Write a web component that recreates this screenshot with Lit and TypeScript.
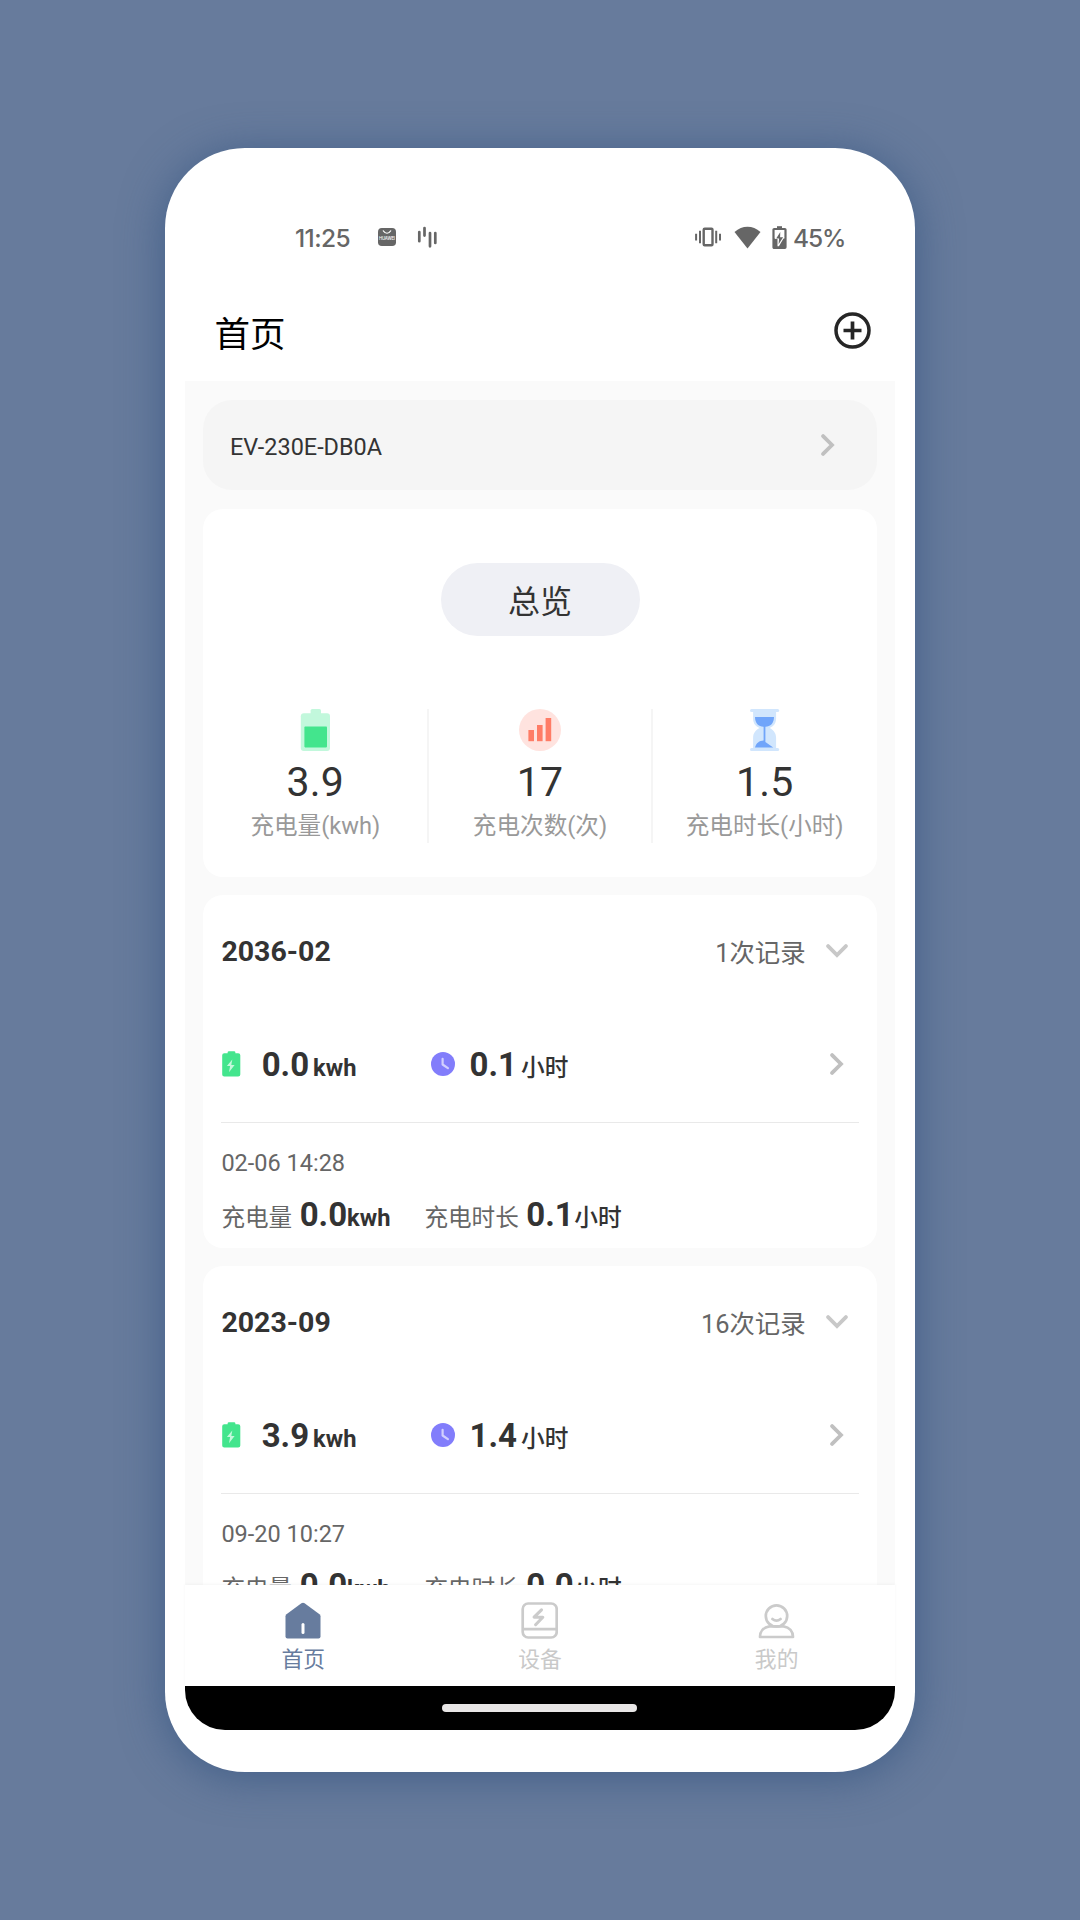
import { LitElement, html, css, svg } from "lit";
import { customElement, property } from "lit/decorators.js";

interface Session {
  time: string;
  energy: string;
  hours: string;
}

interface MonthRecord {
  month: string;
  count: number;
  energy: string;
  hours: string;
  sessions: Session[];
}

const MONTHS: MonthRecord[] = [
  {
    month: "2036-02",
    count: 1,
    energy: "0.0",
    hours: "0.1",
    sessions: [{ time: "02-06 14:28", energy: "0.0", hours: "0.1" }],
  },
  {
    month: "2023-09",
    count: 16,
    energy: "3.9",
    hours: "1.4",
    sessions: [{ time: "09-20 10:27", energy: "0.0", hours: "0.0" }],
  },
];

const batteryLevel = svg`
  <svg width="30" height="42" viewBox="0 0 30 42">
    <rect x="10.600" y="0" width="10.4" height="8" rx="1.6" fill="#c2f8dc"/>
    <rect x="0.8" y="4.2" width="29.2" height="37.8" rx="3" fill="#c2f8dc"/>
    <rect x="4.400" y="17.6" width="22.600" height="20.8" rx="0.8" fill="#43e58d"/>
  </svg>`;

const barChart = svg`
  <svg width="42" height="42" viewBox="0 0 42 42">
    <circle cx="21" cy="21" r="21" fill="#ffe3df"/>
    <rect x="9.4" y="21" width="5.6" height="11.2" fill="#ff7c66"/>
    <rect x="18" y="16" width="5.6" height="16.2" fill="#ff7c66"/>
    <rect x="26.6" y="9" width="5.6" height="23.2" fill="#ff7c66"/>
  </svg>`;

const hourglass = svg`
  <svg width="30" height="42" viewBox="0 0 30 42">
    <g fill="#d1e6fd">
      <rect x="0" y="0" width="29.2" height="3" rx="1.5"/>
      <rect x="0" y="39" width="29.2" height="3" rx="1.5"/>
      <path d="M3.100 2h23v7.5c0 5-2.500 7.500-6.500 9.500 4 2 6.500 5 6.500 10v10.500h-23V29c0-5 2.500-8 6.500-10-4-2-6.500-4.500-6.500-9.500z"/>
    </g>
    <path d="M5 8h19c0 6-3.500 9.800-8.600 9.800V33l7.800 5.500H5c1.200-4.500 4.300-6.800 8.600-7V17.800C8.500 17.800 5 14 5 8z" fill="#70a5fa"/>
  </svg>`;

const chargeBadge = svg`
  <svg width="19" height="26" viewBox="0 0 19 26">
    <path d="M5.600 1.600Q5.600 0.200 7 0.200h5Q13.400 0.200 13.400 1.600V2.200h2.800q2.100 0 2.100 2.100v19.200q0 2.100-2.100 2.100H2.300q-2.100 0-2.100-2.100V4.300q0-2.100 2.100-2.100h3.300z" fill="#43e58d"/>
    <path d="M10.300 8.400L4.900 15h3.200L7 21.300l5.600-7.300H9.300z" fill="#c4f8dc"/>
  </svg>`;

const clockBadge = svg`
  <svg width="24" height="24" viewBox="0 0 24 24">
    <circle cx="12" cy="12" r="12" fill="#827dfb"/>
    <path d="M11.600 6.800v5.700l5.300 3.700" fill="none" stroke="#d2d0fe" stroke-width="2.200" stroke-linecap="round" stroke-linejoin="round"/>
  </svg>`;

const chevronRight = svg`
  <svg width="14" height="22" viewBox="0 0 14 22">
    <path d="M2.100 2.100L11 11l-8.900 8.900" fill="none" stroke="#c0c0c0" stroke-width="3.800" stroke-linecap="round"/>
  </svg>`;

const chevronDown = svg`
  <svg width="22" height="14" viewBox="0 0 22 14">
    <path d="M2.100 2.100L11 11l8.900-8.900" fill="none" stroke="#c8c8c8" stroke-width="3.800" stroke-linecap="round"/>
  </svg>`;

const homeIcon = svg`
  <svg width="36" height="37" viewBox="0 0 36 37">
    <path d="M16.400 1.200q1.600-1.100 3.200 0l14.900 11q1 0.800 1 2V34.500q0 2-2 2h-31q-2 0-2-2V14.200q0-1.200 1-2z" fill="#677c9e"/>
    <path d="M18 22.500v8" stroke="#fff" stroke-width="3" stroke-linecap="round"/>
  </svg>`;

const deviceIcon = svg`
  <svg width="37" height="37" viewBox="0 0 37 37" fill="none" stroke="#cbcbcb" stroke-width="2.700">
    <rect x="1.700" y="1.500" width="34" height="34" rx="5.500"/>
    <path d="M1.700 27.200h34"/>
    <path d="M20.500 7.800l-7.400 7.400h8.700l-7.200 7.500" stroke-width="3.100" stroke-linecap="round" stroke-linejoin="round"/>
  </svg>`;

const userIcon = svg`
  <svg width="37" height="37" viewBox="0 0 37 37" fill="none" stroke="#cbcbcb" stroke-width="2.700" stroke-linecap="round" stroke-linejoin="round">
    <circle cx="18.500" cy="14" r="10.700"/>
    <path d="M14.400 17q4.100 3.400 8.200 0"/>
    <path d="M11.500 24.300C5.500 25.200 2 29.500 2 35h33c0-5.500-3.500-9.800-9.500-10.700z"/>
  </svg>`;

@customElement("status-bar")
export class StatusBar extends LitElement {
  static styles = css`
    :host {
      display: flex;
      align-items: center;
      justify-content: space-between;
      height: 48px;
      padding: 0 50px 0 110px;
      color: #666;
      font-family: Inter, Roboto, sans-serif;
      font-size: 24.5px;
      font-weight: 500;
    }
    .side {
      display: flex;
      align-items: center;
    }
    .time {
      width: 56px;
      padding-top: 1px;
      white-space: nowrap;
      letter-spacing: -0.6px;
    }
    .bag {
      margin-left: 27px;
    }
    .voice {
      margin-left: 21px;
    }
    .wifi {
      margin-left: 13px;
    }
    .battery {
      margin: 0 6.500px 0 10.500px;
    }
    .percent {
      width: 52px;
      padding-top: 1px;
      letter-spacing: -1.1px;
      white-space: nowrap;
    }
    svg {
      display: block;
    }
  `;

  render() {
    return html`
      <div class="side">
        <span class="time">11:25</span>
        <svg class="bag" width="18" height="18" viewBox="0 0 18 18">
          <rect width="18" height="18" rx="3.800" fill="#666" />
          <path d="M5.300 2.800q3.700 5 7.400 0" fill="none" stroke="#fff" stroke-width="1.100" stroke-linecap="round" />
          <text x="9" y="11.800" font-size="4.200" font-weight="500" fill="#fff" text-anchor="middle" textLength="16">HUAWEI</text>
        </svg>
        <svg class="voice" width="20" height="22" viewBox="0 0 20 22">
          <path d="M2.300 6v9.200M7.500 2.100v7.500M13 7v13.300M18.300 7v10" stroke="#666" stroke-width="2.700" stroke-linecap="round" />
        </svg>
      </div>
      <div class="side">
        <svg width="26" height="20" viewBox="0 0 26 20">
          <rect x="8.700" y="1.800" width="8.800" height="16.400" rx="1" fill="none" stroke="#666" stroke-width="2.400" />
          <path d="M1.100 6.800v6.800M5 3.800v12.400M21.200 3.800v12.400M25 6.800v6.800" stroke="#666" stroke-width="2" />
        </svg>
        <svg class="wifi" width="27" height="23" viewBox="0 0 27 23">
          <path d="M0.500 6Q6.500 0.700 13.500 0.700T26.500 6L13.500 22.600z" fill="#666" />
        </svg>
        <svg class="battery" width="15" height="23" viewBox="0 0 15 23">
          <rect x="5" y="0.200" width="5" height="3" fill="#666" />
          <rect x="1.500" y="3" width="12" height="18.800" rx="0.600" fill="none" stroke="#666" stroke-width="2.200" />
          <path d="M1.500 12.500h12v9.300h-12z" fill="#666" />
          <path d="M8.500 4.500L2.900 13h2.600v7.200h1.400L12.400 11H10V4.500z" fill="#fff" />
          <path d="M8.300 6L4.200 12.600h2.900l-0.500 5.600 4.500-6.900H8.100z" fill="#666" />
        </svg>
        <span class="percent">45%</span>
      </div>
    `;
  }
}

@customElement("overview-card")
export class OverviewCard extends LitElement {
  static styles = css`
    :host {
      display: flex;
      flex-direction: column;
      align-items: center;
      flex: none;
      height: 368.4px;
      box-sizing: border-box;
      padding-top: 54.4px;
      border-radius: 20px;
      background: #fff;
    }
    .pill {
      width: 199px;
      height: 73px;
      border-radius: 37px;
      background: #eff0f5;
      color: #333;
      font-size: 32px;
      line-height: 78px;
      text-align: center;
    }
    .metrics {
      display: grid;
      grid-template-columns: repeat(3, 1fr);
      width: 100%;
      height: 133px;
      margin-top: 73px;
    }
    .metric {
      display: flex;
      flex-direction: column;
      align-items: center;
    }
    .metric + .metric {
      box-shadow: -1px 0 0 #f5f5f5, inset 1px 0 0 #f5f5f5;
    }
    svg {
      display: block;
    }
    .value {
      margin-top: 6px;
      height: 50px;
      color: #333;
      font-size: 41px;
      line-height: 50px;
      letter-spacing: 0.2px;
    }
    .label {
      height: 34px;
      margin-top: 2px;
      color: #999;
      font-size: 23.600px;
      line-height: 34px;
      white-space: nowrap;
    }
  `;

  render() {
    const metrics = [
      { icon: batteryLevel, value: "3.9", label: "充电量(kwh)" },
      { icon: barChart, value: "17", label: "充电次数(次)" },
      { icon: hourglass, value: "1.5", label: "充电时长(小时)" },
    ];
    return html`
      <div class="pill">总览</div>
      <div class="metrics">
        ${metrics.map(
          (m) => html`
            <div class="metric">
              ${m.icon}
              <div class="value">${m.value}</div>
              <div class="label">${m.label}</div>
            </div>
          `,
        )}
      </div>
    `;
  }
}

@customElement("month-card")
export class MonthCard extends LitElement {
  @property({ attribute: false }) record!: MonthRecord;

  static styles = css`
    :host {
      display: block;
      flex: none;
      height: 352.4px;
      box-sizing: border-box;
      padding: 0 18.400px;
      border-radius: 20px;
      background: #fff;
      color: #333;
    }
    .head {
      display: flex;
      align-items: center;
      height: 111px;
    }
    .month {
      flex: 1;
      padding-top: 2px;
      font-size: 28.500px;
      font-weight: 700;
    }
    .count {
      margin-right: 20px;
      color: #666;
      font-size: 25.400px;
    }
    .head svg {
      margin-right: 11px;
    }
    .totals {
      display: flex;
      align-items: center;
      height: 115.600px;
      border-bottom: 1px solid #e9e9e9;
    }
    .total {
      display: flex;
      align-items: center;
      width: 208px;
      padding-left: 0.600px;
    }
    .total.hours {
      flex: 1;
    }
    .energy svg {
      margin-right: 20.700px;
    }
    .hours svg {
      margin-right: 15px;
    }
    .totals > svg {
      margin-right: 15px;
    }
    .figure {
      display: flex;
      align-items: baseline;
      line-height: 40px;
      padding-top: 5px;
    }
    .num {
      font-size: 33px;
      font-weight: 700;
    }
    .unit {
      font-size: 23.700px;
      font-weight: 700;
    }
    .unit.cjk {
      font-weight: 500;
    }
    .figure .unit {
      margin-left: 4px;
    }
    .session .time {
      height: 34px;
      margin-top: 23px;
      color: #666;
      font-size: 23.500px;
      line-height: 34px;
    }
    .detail {
      display: flex;
      align-items: baseline;
      height: 40px;
      margin-top: 15px;
      line-height: 40px;
    }
    .caption {
      margin-right: 7.500px;
      color: #666;
      font-size: 23.600px;
    }
    .detail .unit + .caption {
      margin-left: 34px;
    }
    .detail .cjk {
      margin-left: 0.500px;
    }
    svg {
      display: block;
      flex: none;
    }
  `;

  render() {
    const r = this.record;
    return html`
      <div class="head">
        <span class="month">${r.month}</span>
        <span class="count">${r.count}次记录</span>
        ${chevronDown}
      </div>
      <div class="totals">
        <div class="total energy">
          ${chargeBadge}
          <div class="figure"><span class="num">${r.energy}</span><span class="unit">kwh</span></div>
        </div>
        <div class="total hours">
          ${clockBadge}
          <div class="figure"><span class="num">${r.hours}</span><span class="unit cjk">小时</span></div>
        </div>
        ${chevronRight}
      </div>
      ${r.sessions.map(
        (s) => html`
          <div class="session">
            <div class="time">${s.time}</div>
            <div class="detail">
              <span class="caption">充电量</span><span class="num">${s.energy}</span><span class="unit">kwh</span>
              <span class="caption">充电时长</span><span class="num">${s.hours}</span><span class="unit cjk">小时</span>
            </div>
          </div>
        `,
      )}
    `;
  }
}

@customElement("tab-bar")
export class TabBar extends LitElement {
  static styles = css`
    :host {
      display: grid;
      grid-template-columns: repeat(3, 1fr);
      flex: none;
      height: 101px;
      background: #fff;
      box-shadow: 0 -1px 3px rgba(0, 0, 0, 0.04);
      z-index: 1;
    }
    .tab {
      display: flex;
      flex-direction: column;
      align-items: center;
      padding-top: 17.500px;
      color: #c9c9c9;
      font-size: 21.800px;
      line-height: 32px;
    }
    .tab.active {
      color: #677c9e;
    }
    svg {
      display: block;
      margin-bottom: 5px;
    }
  `;

  render() {
    return html`
      <div class="tab active">${homeIcon}<span>首页</span></div>
      <div class="tab">${deviceIcon}<span>设备</span></div>
      <div class="tab">${userIcon}<span>我的</span></div>
    `;
  }
}

@customElement("app-root")
export class AppRoot extends LitElement {
  static styles = css`
    :host {
      display: block;
      width: 1080px;
      height: 1920px;
      box-sizing: border-box;
      padding: 148px 165px;
      overflow: hidden;
      background: #677b9c;
      font-family: Roboto, "Noto Sans CJK SC", sans-serif;
    }
    .phone {
      display: flex;
      flex-direction: column;
      width: 750px;
      height: 1624px;
      box-sizing: border-box;
      padding: 65px 20px 42px;
      border-radius: 80px;
      background: #fff;
      box-shadow: 0 5px 44px rgba(61, 91, 133, 0.9);
    }
    .title-bar {
      display: flex;
      align-items: center;
      justify-content: space-between;
      height: 101px;
      margin-top: 19px;
      padding: 0 24.500px 0 29.500px;
    }
    .title {
      color: #000;
      font-size: 35.500px;
      line-height: 52px;
      padding-top: 8px;
    }
    .content {
      display: flex;
      flex-direction: column;
      gap: 18.400px;
      height: 1203.5px;
      box-sizing: border-box;
      padding: 18.600px 18px 0;
      overflow: hidden;
      background: #fafafa;
    }
    .device {
      display: flex;
      align-items: center;
      justify-content: space-between;
      flex: none;
      height: 90.600px;
      box-sizing: border-box;
      padding: 0 42px 0 27px;
      border-radius: 29px;
      background: #f5f5f5;
      color: #333;
      font-size: 23.450px;
    }
    .device span {
      padding-top: 4px;
    }
    .gesture {
      display: flex;
      align-items: center;
      justify-content: center;
      flex: none;
      height: 44px;
      box-sizing: border-box;
      padding-right: 1px;
      border-radius: 0 0 40px 40px;
      background: #000;
    }
    .handle {
      width: 195px;
      height: 8px;
      border-radius: 4px;
      background: #e8e6e6;
    }
    svg {
      display: block;
    }
  `;

  render() {
    return html`
      <div class="phone">
        <status-bar></status-bar>
        <div class="title-bar">
          <span class="title">首页</span>
          <svg width="37" height="37" viewBox="0 0 37 37" fill="none" stroke="#262626">
            <circle cx="18.500" cy="18.500" r="16.500" stroke-width="3.500" />
            <path d="M18.500 9.500v18M9.500 18.500h18" stroke-width="3.700" />
          </svg>
        </div>
        <div class="content">
          <div class="device"><span>EV-230E-DB0A</span>${chevronRight}</div>
          <overview-card></overview-card>
          ${MONTHS.map((m) => html`<month-card .record=${m}></month-card>`)}
        </div>
        <tab-bar></tab-bar>
        <div class="gesture"><div class="handle"></div></div>
      </div>
    `;
  }
}
